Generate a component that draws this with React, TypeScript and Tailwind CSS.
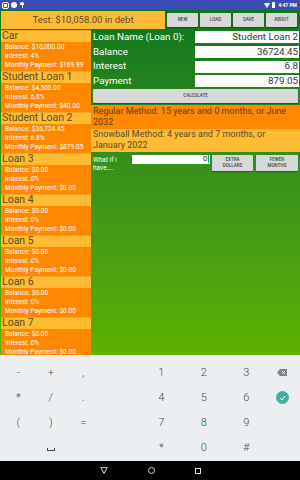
import React from 'react';

const loans = [
    {name: 'Car', balance: '$10,000.00', interest: '4%', payment: '$169.99'},
    {name: 'Student Loan 1', balance: '$4,500.00', interest: '6.8%', payment: '$40.00'},
    {name: 'Student Loan 2', balance: '$36,724.45', interest: '6.8%', payment: '$879.05'},
    {name: 'Loan 3', balance: '$0.00', interest: '0%', payment: '$0.00'},
    {name: 'Loan 4', balance: '$0.00', interest: '0%', payment: '$0.00'},
    {name: 'Loan 5', balance: '$0.00', interest: '0%', payment: '$0.00'},
    {name: 'Loan 6', balance: '$0.00', interest: '0%', payment: '$0.00'},
    {name: 'Loan 7', balance: '$0.00', interest: '0%', payment: '$0.00'},
];

const fields = [
    {label: 'Loan Name (Loan 0):', value: 'Student Loan 2'},
    {label: 'Balance', value: '36724.45'},
    {label: 'Interest', value: '6.8'},
    {label: 'Payment', value: '879.05'},
];

function GrayButton({children, className = ''}: { children: React.ReactNode, className?: string }) {
    return (
        <div className={`flex items-center justify-center text-center bg-[#d7d8d8] rounded-[1px] shadow-[0_1px_1px_rgba(0,0,0,0.35)] text-[4.5px] leading-[6px] font-medium text-[#444] ${className}`}>
            {children}
        </div>
    );
}

function Key({children}: { children?: React.ReactNode }) {
    return (
        <div className="h-[25px] flex items-center justify-center text-[11px] leading-none text-[#3c4a52] font-light">
            {children}
        </div>
    );
}

export default function App() {
    return (
        <div className="w-[300px] h-[480px] flex flex-col overflow-hidden font-['Roboto',sans-serif]">
            {/* status bar */}
            <div className="h-[10px] bg-[#3b4db5] flex items-center justify-between px-[3px]">
                <div className="flex items-center gap-[2px]">
                    <div className="w-[5px] h-[5px] bg-white rounded-[1px] border border-[#3b4db5] outline outline-1 outline-white"></div>
                    <div className="w-[6px] h-[6px] rounded-full bg-white ml-[1px]"></div>
                    <div className="flex flex-col items-center ml-[1px]">
                        <div className="w-[4px] h-[3px] bg-white rounded-t-full"></div>
                        <div className="w-[1px] h-[3px] bg-white"></div>
                    </div>
                </div>
                <div className="flex items-center gap-[2px]">
                    <svg width="6" height="5" viewBox="0 0 6 5"><path d="M0 0.5 Q3 -0.6 6 0.5 L3 5 Z" fill="white"/></svg>
                    <div className="w-[3px] h-[6px] bg-white rounded-[0.5px]"></div>
                    <span className="text-[5px] font-bold text-white leading-none ml-[1px]">4:47 PM</span>
                </div>
            </div>

            {/* app */}
            <div className="h-[345px] flex flex-col overflow-hidden bg-gradient-to-b from-[#0b761f] to-[#5db100] pt-[1px] pl-[1px]">
                <div className="h-[19px] flex items-start shrink-0">
                    <div className="w-[164px] h-[18px] bg-[#ffbb33] flex items-center justify-center text-[9.5px] text-[#5a4a28]">
                        Test: $10,058.00 in debt
                    </div>
                    <div className="flex gap-[2px] ml-[2px] mt-[2px]">
                        <GrayButton className="w-[31px] h-[14px]">NEW</GrayButton>
                        <GrayButton className="w-[31px] h-[14px]">LOAD</GrayButton>
                        <GrayButton className="w-[31px] h-[14px]">SAVE</GrayButton>
                        <GrayButton className="w-[31px] h-[14px]">ABOUT</GrayButton>
                    </div>
                </div>

                <div className="flex flex-1 min-h-0">
                    {/* loan list */}
                    <div className="w-[90px] shrink-0 flex flex-col">
                        {loans.map((loan) => (
                            <div key={loan.name} className="flex flex-col shrink-0">
                                <div className="h-[12px] bg-[#ffbb33] border-t border-[#e9a830] flex items-center pl-[1px] text-[10.5px] text-[#5a4a28] leading-none">
                                    {loan.name}
                                </div>
                                <div className="h-[29px] bg-[#ff8800] pl-[4px] pt-[1px] text-[6.6px] leading-[9.2px] text-white whitespace-nowrap">
                                    <div>Balance: {loan.balance}</div>
                                    <div>Interest: {loan.interest}</div>
                                    <div>Monthly Payment: {loan.payment}</div>
                                </div>
                            </div>
                        ))}
                    </div>

                    {/* editor */}
                    <div className="flex-1 flex flex-col">
                        {fields.map((f) => (
                            <div key={f.label} className="h-[14.7px] flex items-center pl-[2px] pr-[1px]">
                                <div className="flex-1 text-[9.8px] text-white whitespace-nowrap">{f.label}</div>
                                <div className="w-[104px] h-[12px] bg-white flex items-center justify-end pr-[1px] text-[9.8px] text-[#333]">
                                    {f.value}
                                </div>
                            </div>
                        ))}
                        <div className="px-[2px] pt-[0.5px]">
                            <GrayButton className="h-[13.5px]">CALCULATE</GrayButton>
                        </div>
                        <div className="mt-[2px] bg-[#ff8800] px-[2px] py-[1px] text-[9px] leading-[11px] text-[#5b3f12] whitespace-nowrap">
                            Regular Method: 15 years and 0 months, or June<br/>2032
                        </div>
                        <div className="bg-[#ffbb33] px-[2px] py-[0.5px] text-[9px] leading-[11px] text-[#5a4a28] whitespace-nowrap">
                            Snowball Method: 4 years and 7 months, or<br/>January 2022
                        </div>
                        <div className="flex items-start mt-[3px] pl-[2px]">
                            <div className="w-[39px] text-[6.5px] leading-[8px] text-white mt-[1px]">What if i<br/>have....</div>
                            <div className="w-[78px] h-[9px] bg-white flex items-center justify-end pr-[1px] text-[8px] text-[#333]">
                                0<span className="w-[1px] h-[8px] bg-[#26a69a] ml-[0.5px]"></span>
                            </div>
                            <GrayButton className="w-[41px] h-[16px] ml-[2px]">EXTRA<br/>DOLLARS</GrayButton>
                            <GrayButton className="w-[42px] h-[16px] ml-[3px]">FEWER<br/>MONTHS</GrayButton>
                        </div>
                    </div>
                </div>
            </div>

            {/* keyboard */}
            <div className="h-[106px] bg-[#eceff1] pt-[5px] pl-[2px]">
                <div className="grid grid-cols-[32.5px_32.5px_32.5px_40.5px_42.5px_42.5px_42.5px_29px]">
                    <Key>-</Key><Key>+</Key><Key>,</Key><Key/>
                    <Key>1</Key><Key>2</Key><Key>3</Key>
                    <Key>
                        <svg width="10" height="7" viewBox="0 0 10 7">
                            <path d="M3 0 H10 V7 H3 L0 3.5 Z" fill="#78868c"/>
                            <path d="M5 2 L8 5 M8 2 L5 5" stroke="#eceff1" strokeWidth="1"/>
                        </svg>
                    </Key>
                    <Key>*</Key><Key>/</Key><Key>.</Key><Key/>
                    <Key>4</Key><Key>5</Key><Key>6</Key>
                    <Key>
                        <div className="w-[13px] h-[13px] rounded-full bg-[#3fb0a5] flex items-center justify-center">
                            <svg width="7" height="6" viewBox="0 0 7 6"><path d="M1 3 L3 5 L6 1" stroke="white" strokeWidth="1" fill="none"/></svg>
                        </div>
                    </Key>
                    <Key>(</Key><Key>)</Key><Key>=</Key><Key/>
                    <Key>7</Key><Key>8</Key><Key>9</Key><Key/>
                    <Key/>
                    <Key><div className="w-[8px] h-[3px] border-l border-r border-b border-[#3c4a52] mt-[3px]"></div></Key>
                    <Key/><Key/>
                    <Key>*</Key><Key>0</Key><Key>#</Key><Key/>
                </div>
            </div>

            {/* nav bar */}
            <div className="h-[19px] bg-black flex items-center justify-center gap-[40px]">
                <svg width="8" height="7" viewBox="0 0 8 7"><path d="M0.7 0.7 H7.3 L4 6.3 Z" stroke="#ddd" strokeWidth="1" fill="none"/></svg>
                <div className="w-[7px] h-[7px] rounded-full border border-[#ddd]"></div>
                <div className="w-[6px] h-[6px] border border-[#ddd]"></div>
            </div>
        </div>
    );
}
